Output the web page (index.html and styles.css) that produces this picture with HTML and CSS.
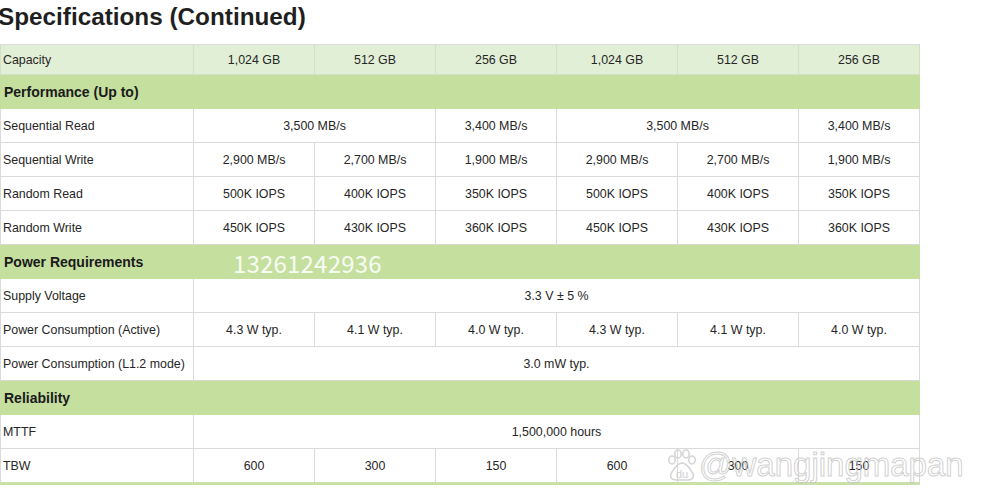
FILE: index.html
```html
<!DOCTYPE html>
<html>
<head>
<meta charset="utf-8">
<link rel="stylesheet" href="styles.css">
</head>
<body>
<div class="page">
  <h1 class="title">Specifications (Continued)</h1>
  <table class="spec">
    <colgroup>
      <col class="c-label"><col class="c-val"><col class="c-val"><col class="c-val"><col class="c-val"><col class="c-val"><col class="c-val">
    </colgroup>
    <tr class="head">
      <td class="label">Capacity</td><td>1,024 GB</td><td>512 GB</td><td>256 GB</td><td>1,024 GB</td><td>512 GB</td><td>256 GB</td>
    </tr>
    <tr class="section"><td colspan="7">Performance (Up to)</td></tr>
    <tr><td class="label">Sequential Read</td><td colspan="2">3,500 MB/s</td><td>3,400 MB/s</td><td colspan="2">3,500 MB/s</td><td>3,400 MB/s</td></tr>
    <tr><td class="label">Sequential Write</td><td>2,900 MB/s</td><td>2,700 MB/s</td><td>1,900 MB/s</td><td>2,900 MB/s</td><td>2,700 MB/s</td><td>1,900 MB/s</td></tr>
    <tr><td class="label">Random Read</td><td>500K IOPS</td><td>400K IOPS</td><td>350K IOPS</td><td>500K IOPS</td><td>400K IOPS</td><td>350K IOPS</td></tr>
    <tr><td class="label">Random Write</td><td>450K IOPS</td><td>430K IOPS</td><td>360K IOPS</td><td>450K IOPS</td><td>430K IOPS</td><td>360K IOPS</td></tr>
    <tr class="section"><td colspan="7">Power Requirements</td></tr>
    <tr><td class="label">Supply Voltage</td><td colspan="6">3.3 V ± 5 %</td></tr>
    <tr><td class="label">Power Consumption (Active)</td><td>4.3 W typ.</td><td>4.1 W typ.</td><td>4.0 W typ.</td><td>4.3 W typ.</td><td>4.1 W typ.</td><td>4.0 W typ.</td></tr>
    <tr><td class="label">Power Consumption (L1.2 mode)</td><td colspan="6">3.0 mW typ.</td></tr>
    <tr class="section"><td colspan="7">Reliability</td></tr>
    <tr><td class="label">MTTF</td><td colspan="6">1,500,000 hours</td></tr>
    <tr class="last"><td class="label">TBW</td><td>600</td><td>300</td><td>150</td><td>600</td><td>300</td><td>150</td></tr>
  </table>
  <div class="wm-phone">13261242936</div>
  <div class="wm-baidu">
    <svg class="paw" width="30" height="32" viewBox="0 0 30 32">
      <g fill="none" stroke="#d4d4d4" stroke-width="1.6">
        <ellipse cx="5" cy="11" rx="3.2" ry="4"/>
        <ellipse cx="11" cy="5" rx="3.2" ry="4"/>
        <ellipse cx="19" cy="5" rx="3.2" ry="4"/>
        <ellipse cx="25" cy="11" rx="3.2" ry="4"/>
        <path d="M15 14 C10 14 8 19 5 23 C2 27 4 31 9 31 L21 31 C26 31 28 27 25 23 C22 19 20 14 15 14 Z"/>
      </g>
      <text x="15" y="29" text-anchor="middle" class="du">du</text>
    </svg>
    <span class="handle">@wangjingmapan</span>
  </div>
</div>
</body>
</html>
```

FILE: styles.css
```css
html, body {
  margin: 0;
  padding: 0;
  background: #ffffff;
}

.page {
  position: relative;
  width: 983px;
  height: 500px;
  overflow: hidden;
  font-family: "Liberation Sans", Arial, sans-serif;
  color: #262626;
}

.title {
  margin: 0 0 0 -2px;
  padding-top: 3px;
  height: 44px;
  font-size: 24.3px;
  line-height: 28px;
  font-weight: bold;
  color: #1f1f1f;
  box-sizing: border-box;
}

.spec {
  border-collapse: collapse;
  table-layout: fixed;
  width: 920px;
  font-size: 12.4px;
}

.c-label { width: 193px; }
.c-val { width: 121px; }

.spec td {
  height: 33px;
  padding: 0;
  border: 1px solid #dadada;
  text-align: center;
  vertical-align: middle;
  white-space: nowrap;
}

.spec td.label {
  text-align: left;
  padding-left: 2px;
}

.spec tr.head td {
  height: 29px;
  background: #e2efd7;
  border-color: #d3dfc8;
  border-top-color: #dcdcdc;
}

.spec tr.section td {
  background: #c5df9f;
  border-color: #c5df9f;
  text-align: left;
  padding-left: 3px;
  font-size: 14px;
  font-weight: bold;
  color: #1a1a1a;
}

.spec tr.last td {
  border-bottom: 3px solid #c9e0aa;
}

.wm-phone {
  position: absolute;
  left: 233px;
  top: 247px;
  font-family: "Noto Sans CJK SC", "Noto Sans", sans-serif;
  font-size: 24px;
  line-height: 32px;
  color: rgba(255, 255, 255, 0.9);
  letter-spacing: 0.2px;
}

.wm-baidu {
  position: absolute;
  left: 667px;
  top: 447px;
  display: flex;
  align-items: center;
  gap: 2px;
}

.paw .du {
  font-family: "Liberation Sans", Arial, sans-serif;
  font-size: 11px;
  fill: #cfcfcf;
}

.handle {
  font-family: "Liberation Sans", Arial, sans-serif;
  font-size: 33px;
  line-height: 36px;
  color: transparent;
  -webkit-text-stroke: 1px rgba(200, 200, 200, 0.85);
}
```
